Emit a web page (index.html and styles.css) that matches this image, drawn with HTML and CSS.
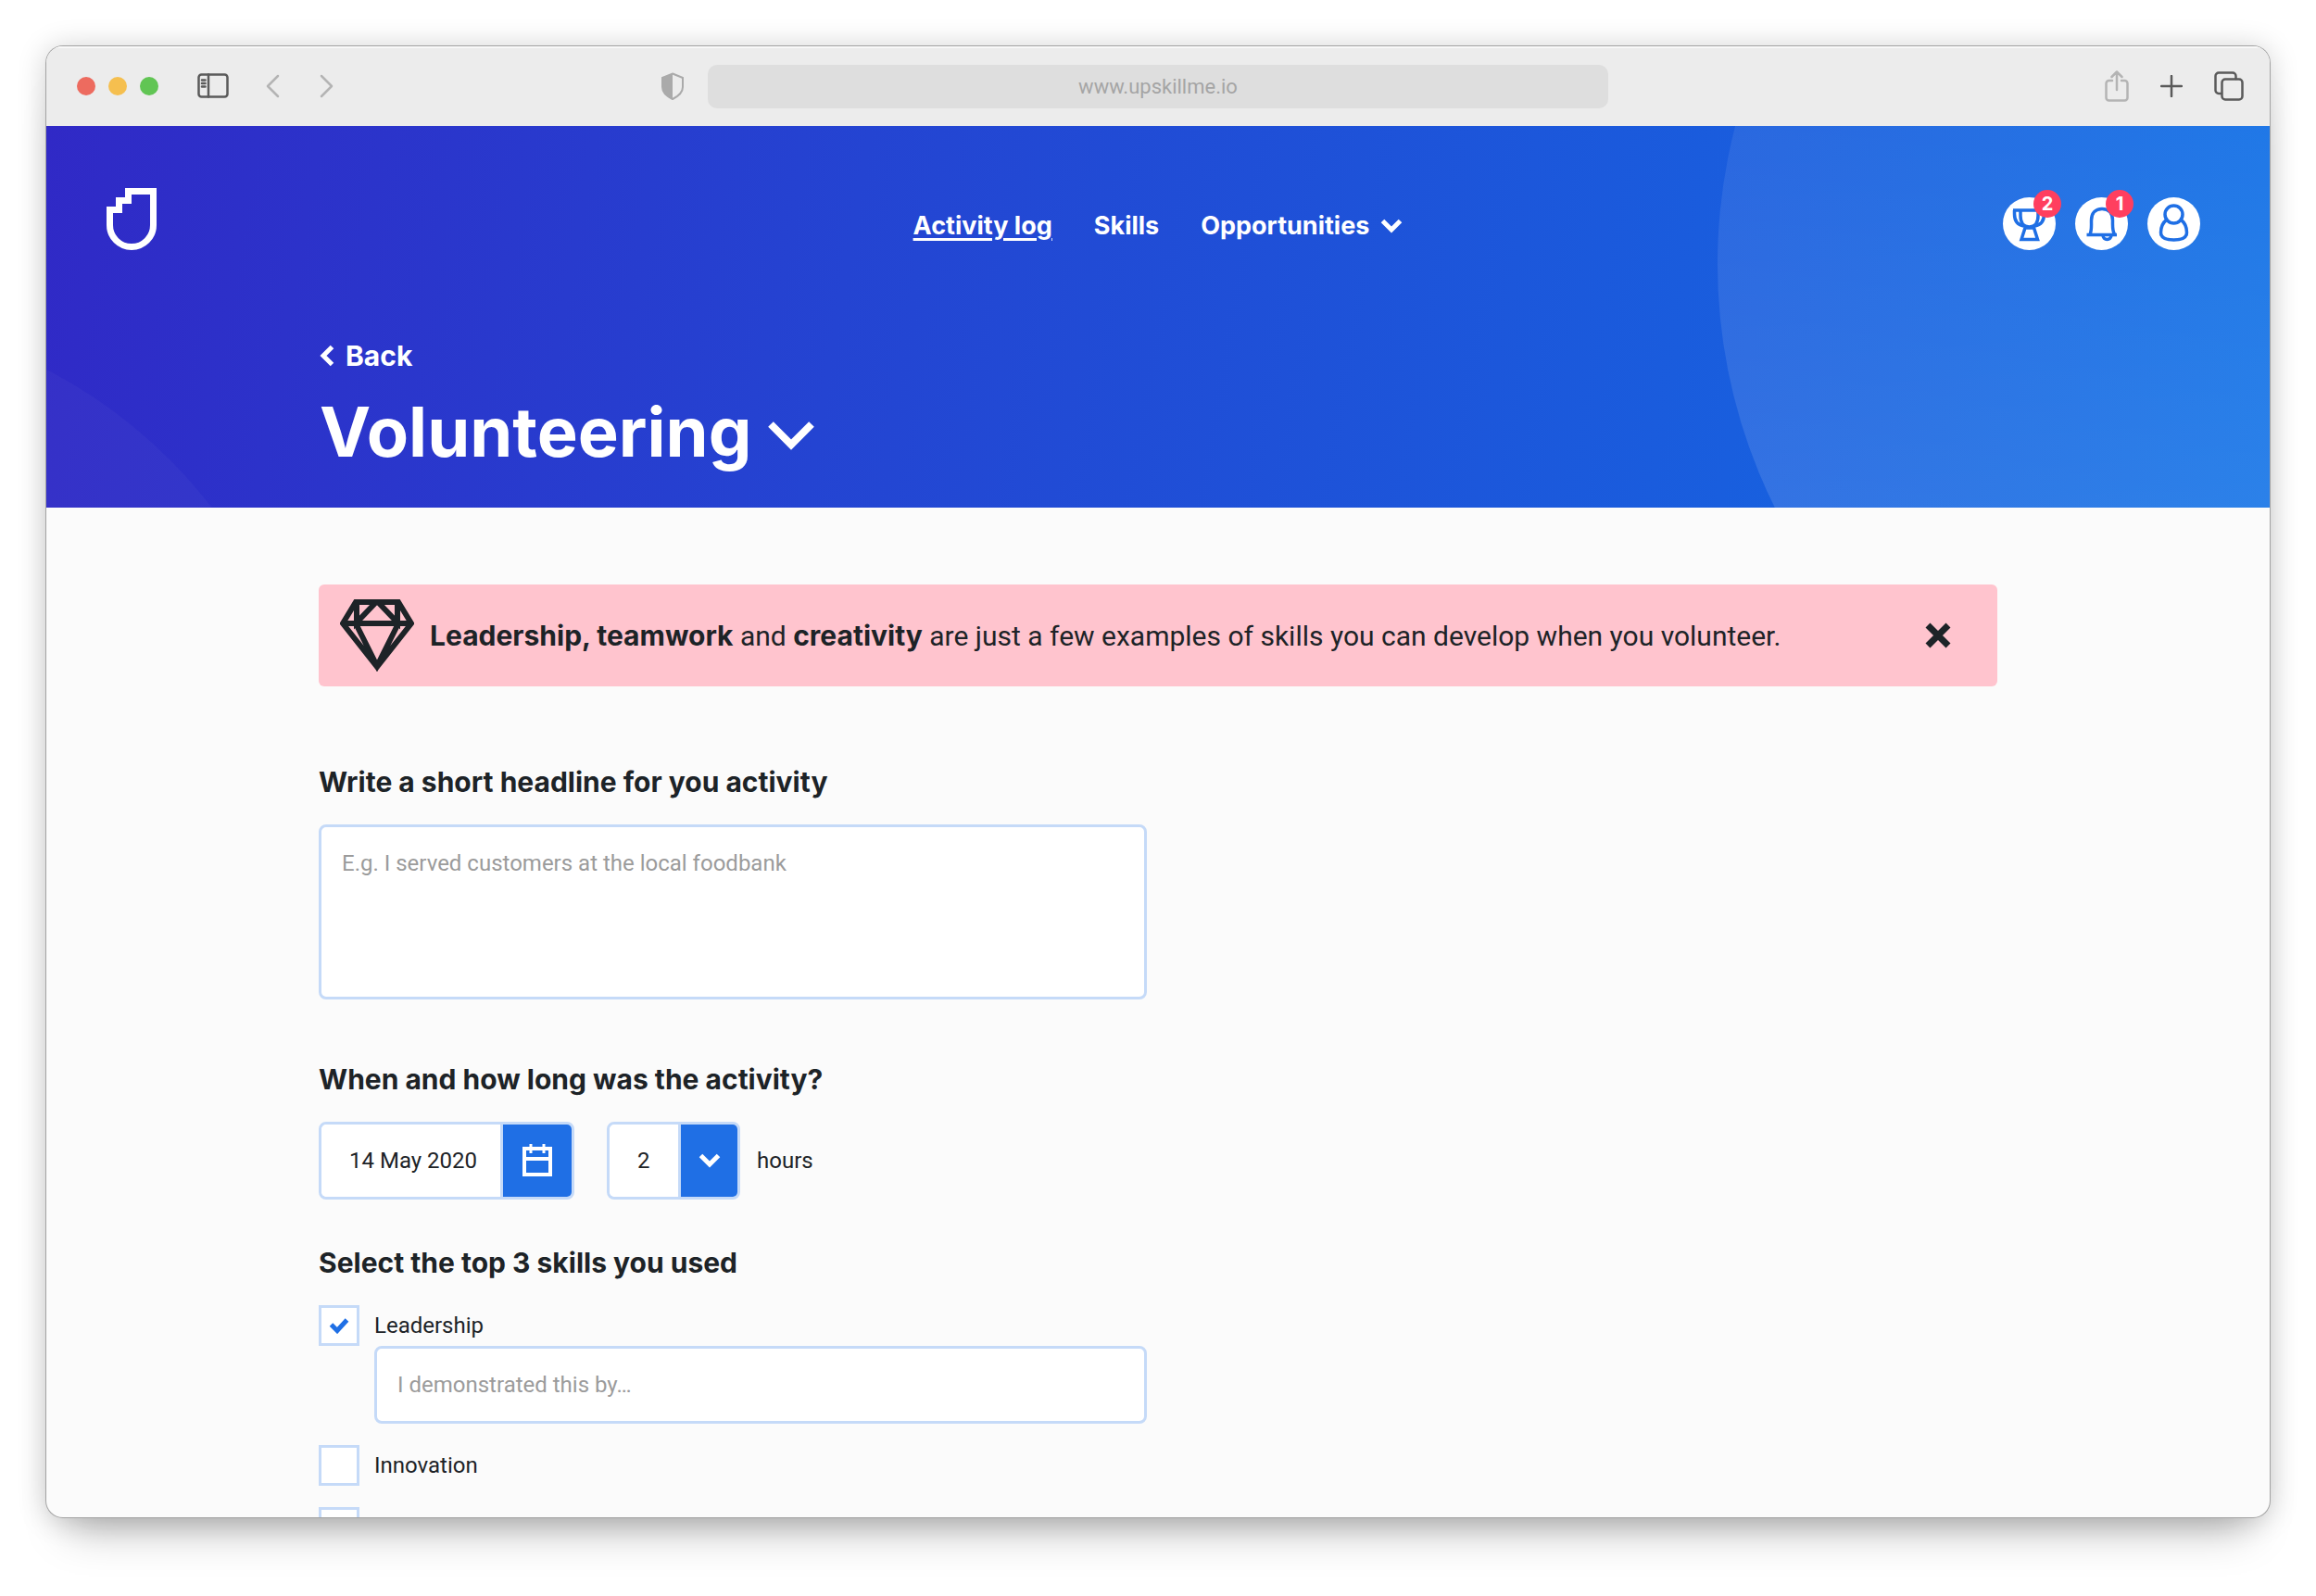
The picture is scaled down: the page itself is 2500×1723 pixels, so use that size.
FILE: index.html
```html
<!DOCTYPE html>
<html lang="en">
<head>
    <meta charset="UTF-8">
    <meta name="viewport" content="width=device-width, initial-scale=1.0">
    <title>Volunteering - Activity log</title>
    <link rel="stylesheet" href="styles.css">
</head>
<body>

    <div class="window">
        <div class="toolbar">
            <div class="toolbar-left">
                <span class="light red"></span>
                <span class="light yellow"></span>
                <span class="light green"></span>
                <button class="tool sidebar" aria-label="Sidebar">
                    <svg width="34" height="28" viewBox="0 0 34 28">
                        <rect x="1.5" y="1.5" width="31" height="24" rx="3"/>
                        <path d="M12 1.5v24M5 7.5h3.5M5 11h3.5M5 14.5h3.5"/>
                    </svg>
                </button>
                <button class="tool pale prev" aria-label="Previous page">
                    <svg width="16" height="26" viewBox="0 0 16 26"><path d="M14 2L3 13l11 11"/></svg>
                </button>
                <button class="tool pale next" aria-label="Next page">
                    <svg width="16" height="26" viewBox="0 0 16 26"><path d="M2 2l11 11L2 24"/></svg>
                </button>
                <svg class="shield" width="26" height="30" viewBox="0 0 26 30">
                    <path d="M13 1.5L24 6v10c0 6-5 10-11 13C7 26 2 22 2 16V6z" fill="none" stroke="#aaa" stroke-width="2"/>
                    <path d="M13 1.5V29C7 26 2 22 2 16V6z" fill="#aaa"/>
                </svg>
            </div>
            <input class="address" type="text" value="www.upskillme.io" aria-label="Address">
            <div class="toolbar-right">
                <button class="tool pale" aria-label="Share">
                    <svg width="26" height="34" viewBox="0 0 26 34"><path d="M8 11H4.5a3 3 0 0 0-3 3v15.5a3 3 0 0 0 3 3h17a3 3 0 0 0 3-3V14a3 3 0 0 0-3-3H18M13 21V2M7.5 7L13 1.5 18.5 7"/></svg>
                </button>
                <button class="tool" aria-label="New tab">
                    <svg width="24" height="24" viewBox="0 0 24 24"><path d="M12 1v22M1 12h22"/></svg>
                </button>
                <button class="tool" aria-label="Show tabs">
                    <svg width="32" height="32" viewBox="0 0 32 32">
                        <path d="M8 24H5a3.5 3.5 0 0 1-3.5-3.5V5A3.5 3.5 0 0 1 5 1.5h15A3.5 3.5 0 0 1 23.5 5v3"/>
                        <rect x="8.5" y="8.5" width="22" height="22" rx="3.5"/>
                    </svg>
                </button>
            </div>
        </div>

        <header class="header">
            <div class="header-top">
                <a class="logo" href="#" aria-label="Home">
                    <svg width="54" height="67" viewBox="0 0 54 67"><path d="M3.5 23.5h10v-10h10v-10h27V40a23.5 23.5 0 0 1-47 0z" fill="none" stroke="#fff" stroke-width="7"/></svg>
                </a>
                <nav class="nav">
                    <a class="active" href="#">Activity log</a>
                    <a href="#">Skills</a>
                    <a href="#">Opportunities
                        <svg width="24" height="16" viewBox="0 0 24 16"><path d="M2.5 2.5L12 12l9.5-9.5" fill="none" stroke="#fff" stroke-width="5"/></svg>
                    </a>
                </nav>
                <div class="actions">
                    <button class="round" aria-label="Achievements">
                        <svg width="57" height="57" viewBox="0 0 57 57">
                            <path d="M11 14h34M19 14v6c0 7 3 12 9.5 12S38 27 38 20v-6M12.5 14v4c0 8 4 12 10 13M44.5 14v4c0 8-4 12-10 13M24 33h9.5l4 12.5H20z"/>
                        </svg>
                        <span class="badge">2</span>
                    </button>
                    <button class="round" aria-label="Notifications">
                        <svg width="57" height="57" viewBox="0 0 57 57">
                            <path d="M16 40c2-4 1.500-8 1.500-15 0-8 4.500-12.500 11.500-12.500S40.500 17 40.500 25c0 7-.5 11 2 15M12.500 40.500H45M30 41a4.500 4.500 0 0 0 9 0"/>
                        </svg>
                        <span class="badge">1</span>
                    </button>
                    <button class="round" aria-label="Profile">
                        <svg width="57" height="57" viewBox="0 0 57 57">
                            <circle cx="28.5" cy="18.5" r="9.5"/>
                            <path d="M20.500 24.500C16 28 14.500 33 14.500 38c0 5 4 8 14 8s14-3 14-8c0-5-1.500-10-6-13.500"/>
                        </svg>
                    </button>
                </div>
            </div>
            <div class="header-title">
                <a class="back" href="#">
                    <svg width="16" height="24" viewBox="0 0 16 24"><path d="M13.5 2.5L4 12l9.5 9.5" fill="none" stroke="#fff" stroke-width="5"/></svg>
                    Back
                </a>
                <h1>Volunteering
                    <svg width="50" height="40" viewBox="0 0 50 40"><path d="M3 12l22 22 22-22" fill="none" stroke="#fff" stroke-width="8"/></svg>
                </h1>
            </div>
        </header>

        <main class="content">
            <div class="banner">
                <svg width="80" height="78" viewBox="0 0 80 78" fill="none" stroke="#1d2327" stroke-width="6">
                    <path d="M17 3h46l14 23-37 47L3 26zM3 26h74M18 3v22L40 2l22 23V3M17 26l23 46 23-46"/>
                </svg>
                <p><strong>Leadership, teamwork</strong> and <strong>creativity</strong> are just a few examples of skills you can develop when you volunteer.</p>
                <button class="close" aria-label="Close">
                    <svg width="28" height="28" viewBox="0 0 28 28"><path d="M3 3l22 22M25 3L3 25" fill="none" stroke="#1d2327" stroke-width="7"/></svg>
                </button>
            </div>

            <form class="form">
                <div class="group">
                    <label class="title" for="headline">Write a short headline for you activity</label>
                    <textarea id="headline" placeholder="E.g. I served customers at the local foodbank"></textarea>
                </div>

                <div class="group">
                    <label class="title" for="date">When and how long was the activity?</label>
                    <div class="when">
                        <div class="field date">
                            <input id="date" type="text" value="14 May 2020">
                            <button type="button" aria-label="Open calendar">
                                <svg width="32" height="36" viewBox="0 0 32 36" fill="none" stroke="#fff" stroke-width="4">
                                    <path d="M2 5h28v28H2zM2 16h28"/>
                                    <path d="M9 0v10M23 0v10" stroke-width="3"/>
                                </svg>
                            </button>
                        </div>
                        <div class="field amount">
                            <select id="hours">
                                <option>1</option>
                                <option selected>2</option>
                                <option>3</option>
                                <option>4</option>
                            </select>
                            <span class="arrow">
                                <svg width="24" height="16" viewBox="0 0 24 16"><path d="M2.5 2.5L12 12l9.5-9.5" fill="none" stroke="#fff" stroke-width="5"/></svg>
                            </span>
                        </div>
                        <label for="hours">hours</label>
                    </div>
                </div>

                <fieldset class="skills">
                    <legend class="title">Select the top 3 skills you used</legend>
                    <div class="skill">
                        <label>
                            <input type="checkbox" checked>
                            <svg class="tick" width="22" height="18" viewBox="0 0 22 18"><path d="M2.5 8L9 14.500 19.500 3" fill="none" stroke="#1f6fe5" stroke-width="5"/></svg>
                            Leadership
                        </label>
                        <input class="reason" type="text" placeholder="I demonstrated this by…" aria-label="How I demonstrated leadership">
                    </div>
                    <div class="skill">
                        <label><input type="checkbox"> Innovation</label>
                    </div>
                    <div class="skill">
                        <input type="checkbox" aria-label="Another skill">
                    </div>
                </fieldset>
            </form>
        </main>
    </div>

</body>
</html>
```
FILE: styles.css
```css
* {
    box-sizing: border-box;
}

body {
    margin: 0;
    padding: 50px 50px 85px;
    height: 100vh;
    overflow: hidden;
    background: #fff;
    font-family: Roboto, sans-serif;
    font-size: 24px;
    line-height: 30px;
    color: #1d2327;
}

a {
    color: inherit;
    text-decoration: none;
}

button {
    padding: 0;
    border: 0;
    background: none;
    cursor: pointer;
}

svg {
    display: block;
}

input,
select,
textarea {
    font: inherit;
    color: inherit;
}

.window {
    height: 100%;
    overflow: hidden;
    border-radius: 18px;
    background: #fbfbfb;
    box-shadow: 0 0 0 1px #a3a3a3, 0 2px 32px rgba(0, 0, 0, 0.2), 0 38px 44px -24px rgba(0, 0, 0, 0.26);
}

/* Browser toolbar */
.toolbar {
    display: grid;
    grid-template-columns: 1fr 972px 1fr;
    align-items: center;
    height: 86px;
    padding-bottom: 2px;
    background: #ececec;
    border-top: 2px solid #f8f8f8;
}

.toolbar-left,
.toolbar-right {
    display: flex;
    align-items: center;
}

.toolbar-left {
    padding: 0 25px 0 33px;
}

.toolbar-right {
    justify-content: flex-end;
    gap: 34px;
    padding-right: 28px;
}

.light {
    width: 20px;
    height: 20px;
    margin-right: 14px;
    border-radius: 50%;
}

.red {
    background: #ed6b5f;
}

.yellow {
    background: #f5bf4f;
}

.green {
    background: #61c554;
}

.tool svg {
    fill: none;
    stroke: #5a5a5a;
    stroke-width: 2.5;
    stroke-linecap: round;
    stroke-linejoin: round;
}

.pale svg {
    stroke: #b4b4b4;
}

.sidebar {
    margin-left: 28px;
}

.prev {
    margin-left: 39px;
}

.next {
    margin-left: 43px;
}

.shield {
    margin-left: auto;
}

.address {
    width: 100%;
    height: 47px;
    border: 0;
    border-radius: 10px;
    background: #dedede;
    color: #a5a5a5;
    font-size: 22px;
    text-align: center;
}

/* Page header */
.header {
    position: relative;
    overflow: hidden;
    padding: 67px 65px 40px;
    background: linear-gradient(100deg, #3029c6 0%, #2444d2 36%, #195ede 76%, #0e70e6 100%);
    color: #fff;
    font-family: Inter, Roboto, sans-serif;
    font-weight: bold;
}

/* Large soft circles behind the header content */
.header::before,
.header::after {
    content: "";
    position: absolute;
    border-radius: 50%;
}

.header::before {
    top: 203px;
    left: -782px;
    width: 1072px;
    height: 1072px;
    background: rgba(255, 255, 255, 0.03);
}

.header::after {
    top: -441px;
    right: -584px;
    width: 1180px;
    height: 1180px;
    background: linear-gradient(rgba(255, 255, 255, 0.07) 37%, rgba(255, 255, 255, 0.12) 72%);
}

.header-top {
    position: relative;
    z-index: 1;
    display: grid;
    grid-template-columns: 1fr auto 1fr;
    align-items: end;
}

.nav {
    display: flex;
    gap: 45px;
    padding-bottom: 9px;
    font-size: 27px;
    line-height: 34px;
}

.nav a {
    display: flex;
    align-items: center;
    gap: 12px;
}

.nav .active {
    text-decoration: underline;
    text-decoration-thickness: 3px;
    text-underline-offset: 4px;
}

.actions {
    display: flex;
    justify-content: flex-end;
    gap: 21px;
    padding-right: 10px;
}

.round {
    position: relative;
    width: 57px;
    height: 57px;
    border-radius: 50%;
    background: #fff;
}

.round svg {
    fill: none;
    stroke: #1f6fe5;
    stroke-width: 3.5;
}

.badge {
    position: absolute;
    top: -8px;
    right: -6px;
    width: 30px;
    height: 30px;
    border-radius: 50%;
    background: #ff3f5f;
    color: #fff;
    font: bold 20px/30px Inter, Roboto, sans-serif;
}

.header-title {
    position: relative;
    z-index: 1;
    margin-top: 96px;
    padding-left: 230px;
}

.back {
    display: inline-flex;
    align-items: center;
    gap: 12px;
    font-size: 30px;
    line-height: 36px;
}

h1 {
    display: flex;
    align-items: center;
    gap: 18px;
    margin: 21px 0 0;
    font-size: 74px;
    line-height: 84px;
}

/* Main content */
.content {
    padding: 83px 294px 0;
}

.banner {
    display: flex;
    align-items: center;
    gap: 17px;
    height: 110px;
    padding: 0 50px 0 23px;
    border-radius: 6px;
    background: #ffc4ce;
    font-size: 30px;
    line-height: 36px;
}

.banner p {
    margin: 0;
}

.banner strong {
    font-family: Inter, Roboto, sans-serif;
}

.close {
    margin-left: auto;
}

.form {
    max-width: 894px;
    margin-top: 85px;
}

.group {
    margin-bottom: 68px;
}

.group + .group {
    margin-bottom: 50px;
}

.title {
    display: block;
    margin-bottom: 28px;
    padding: 0;
    font-family: Inter, Roboto, sans-serif;
    font-size: 30px;
    line-height: 36px;
    font-weight: bold;
}

textarea,
.reason,
.field {
    border: 3px solid #c5daf8;
    border-radius: 8px;
    background: #fff;
}

textarea {
    display: block;
    width: 100%;
    height: 189px;
    padding: 24px 22px;
    resize: none;
}

::placeholder {
    color: #9b9b9b;
    opacity: 1;
}

.when {
    display: flex;
    align-items: center;
}

.field {
    display: flex;
    height: 84px;
}

.field input,
.field select {
    appearance: none;
    border: 0;
    border-right: 3px solid #c5daf8;
    border-radius: 6px 0 0 6px;
    background: #fff;
}

.date {
    width: 276px;
    margin-right: 35px;
}

.date input {
    flex: 1;
    min-width: 0;
    padding: 0 0 0 30px;
}

.field button,
.arrow {
    display: flex;
    align-items: center;
    justify-content: center;
    width: 74px;
    border-radius: 0 5px 5px 0;
    background: #1f6fe5;
}

.amount {
    width: 144px;
    margin-right: 18px;
}

.amount select {
    flex: 1;
    padding: 0 0 0 30px;
}

.arrow {
    width: 61px;
}

.skills {
    margin: 0;
    padding: 0;
    border: 0;
}

.skill {
    margin-bottom: 23px;
}

.skill label {
    position: relative;
    display: flex;
    align-items: center;
    gap: 16px;
}

.skill [type="checkbox"] {
    appearance: none;
    display: block;
    width: 44px;
    height: 44px;
    margin: 0;
    border: 3px solid #c5daf8;
    background: #fff;
}

/* Tick sits on top of the box */
.tick {
    position: absolute;
    left: 11px;
    display: none;
}

:checked + .tick {
    display: block;
}

.reason {
    display: block;
    width: calc(100% - 60px);
    height: 84px;
    margin-left: 60px;
    padding: 0 22px;
}
```
